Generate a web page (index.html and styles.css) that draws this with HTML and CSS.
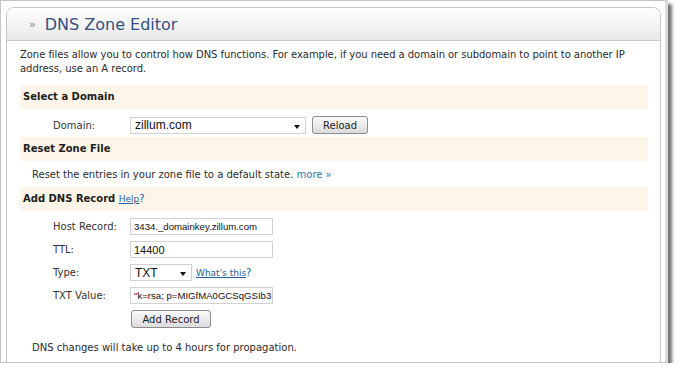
FILE: index.html
```html
<!DOCTYPE html>
<html lang="en">
<head>
    <meta charset="UTF-8">
    <title>DNS Zone Editor</title>
    <link rel="stylesheet" href="styles.css">
</head>
<body>
    <div class="frame">
        <div class="panel">
            <div class="panel-head">
                <span class="raquo">&raquo;</span>
                <h1>DNS Zone Editor</h1>
            </div>
            <div class="panel-body">
                <p class="intro">Zone files allow you to control how DNS functions. For example, if you need a domain or subdomain to point to another IP address, use an A record.</p>

                <!-- Dominio -->
                <div class="band">Select a Domain</div>
                <div class="domain-row">
                    <label class="label">Domain:</label>
                    <span class="select-wrap wide">
                        <select class="select big"><option>zillum.com</option></select>
                    </span>
                    <button class="btn">Reload</button>
                </div>

                <!-- Reset -->
                <div class="band">Reset Zone File</div>
                <p class="note">Reset the entries in your zone file to a default state. <a href="#" class="more">more &raquo;</a></p>

                <!-- Nuevo registro -->
                <div class="band">Add DNS Record <a href="#" class="help">Help</a><span class="q">?</span></div>
                <div class="form">
                    <label class="label">Host Record:</label>
                    <input class="field" type="text" value="3434._domainkey.zillum.com">

                    <label class="label">TTL:</label>
                    <input class="field big" type="text" value="14400">

                    <label class="label">Type:</label>
                    <div class="type-row">
                        <span class="select-wrap narrow">
                            <select class="select big"><option>TXT</option></select>
                        </span>
                        <a href="#" class="whats">What's this</a><span class="q">?</span>
                    </div>

                    <label class="label">TXT Value:</label>
                    <input class="field" type="text" value="&quot;k=rsa; p=MIGfMA0GCSqGSIb3DQEBAQUAA4GNADCBiQKBgQC">

                    <span></span>
                    <div><button class="btn add">Add Record</button></div>
                </div>

                <p class="note last">DNS changes will take up to 4 hours for propagation.</p>
            </div>
        </div>
    </div>
</body>
</html>
```

FILE: styles.css
```css
body {
    margin: 0;
    background: #ffffff;
    font-family: 'DejaVu Sans', Verdana, sans-serif;
    font-size: 10px;
    color: #2b2b2b;
}

.frame {
    box-sizing: border-box;
    width: 668px;
    height: 363px;
    padding: 6px 4px 0 5px;
    background: #ffffff;
    border: 1px solid #c4c4c4;
    border-right: 3px solid #dcdcdc;
    box-shadow: 4px 4px 3px rgba(0, 0, 0, 0.55);
    overflow: hidden;
}

.panel {
    height: 400px;
    border: 1px solid #c8c8c8;
    border-radius: 8px 8px 0 0;
}

.panel-head {
    display: flex;
    align-items: center;
    height: 32px;
    padding-left: 22px;
    border-bottom: 1px solid #c8c8c8;
    border-radius: 7px 7px 0 0;
    background: linear-gradient(#ffffff, #e9e9e9);
}

.raquo {
    color: #8a8a8a;
    font-size: 11px;
    margin-right: 9px;
}

h1 {
    margin: 0;
    font-size: 16px;
    font-weight: normal;
    color: #34507f;
}

.panel-body {
    padding: 7px 12px 0 13px;
}

.intro {
    margin: 0 0 9px;
    line-height: 14px;
    letter-spacing: -0.05px;
}

.band {
    height: 24px;
    line-height: 24px;
    padding-left: 3px;
    background: #fdf5e7;
    font-weight: bold;
    color: #1e1e1e;
}

.help {
    font-weight: normal;
    font-size: 9px;
    color: #2a5d9b;
}

.q {
    font-weight: normal;
    color: #2a5d9b;
}

.domain-row {
    display: flex;
    align-items: center;
    margin: 7px 0 3px 33px;
    height: 18px;
}

.label {
    width: 77px;
    color: #333;
}

.select-wrap {
    position: relative;
    display: inline-block;
    height: 17px;
}

.select-wrap::after {
    content: '';
    position: absolute;
    right: 6px;
    top: 8px;
    border-left: 3px solid transparent;
    border-right: 3px solid transparent;
    border-top: 4px solid #111;
    pointer-events: none;
}

.select-wrap.wide {
    width: 176px;
}

.select-wrap.narrow {
    width: 62px;
}

.select {
    appearance: none;
    -webkit-appearance: none;
    box-sizing: border-box;
    width: 100%;
    height: 17px;
    margin: 0;
    padding: 0 0 0 4px;
    border: 1px solid #d2d2d2;
    border-radius: 0;
    background: #fff;
    color: #111;
    font-family: 'Liberation Sans', Arial, sans-serif;
}

.big {
    font-size: 12px;
}

.btn {
    box-sizing: border-box;
    height: 18px;
    margin-left: 6px;
    padding: 0 10px;
    border: 1px solid #8c8c8c;
    border-radius: 3px;
    background: linear-gradient(#fafafa, #dcdcdc);
    font-family: 'DejaVu Sans', Verdana, sans-serif;
    font-size: 10px;
    color: #1e1e1e;
}

.btn.add {
    margin-left: 1px;
    width: 80px;
    padding: 0;
}

.note {
    margin: 0;
    padding-left: 12px;
    line-height: 14px;
    margin-top: 7px;
    margin-bottom: 5px;
}

.more {
    color: #2d7aa8;
    text-decoration: none;
}

.form {
    display: grid;
    grid-template-columns: 77px 143px;
    row-gap: 6px;
    align-items: center;
    margin: 7px 0 0 33px;
}

.field {
    box-sizing: border-box;
    width: 143px;
    height: 17px;
    margin: 0;
    padding: 0 0 0 3px;
    border: 1px solid #d2d2d2;
    font-family: 'Liberation Sans', Arial, sans-serif;
    font-size: 9.6px;
    color: #111;
}

.field.big {
    font-size: 11px;
}

.type-row {
    display: flex;
    align-items: center;
    white-space: nowrap;
}

.whats {
    margin-left: 4px;
    font-size: 9px;
    color: #2a5d9b;
}

.note.last {
    margin-top: 13px;
}
```
